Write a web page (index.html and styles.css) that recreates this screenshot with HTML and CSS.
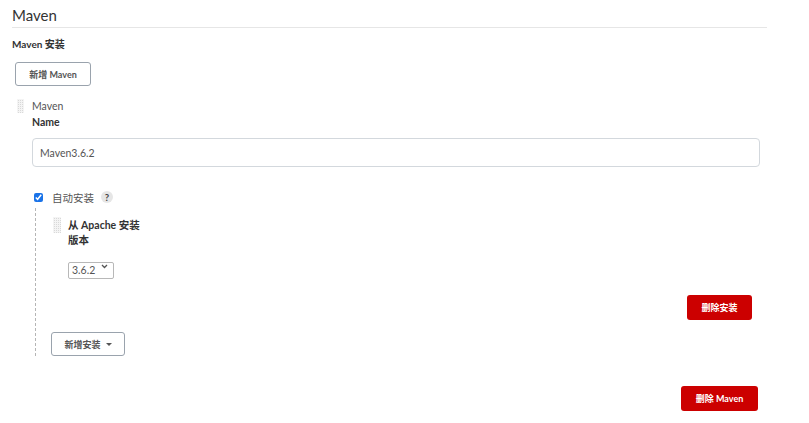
FILE: index.html
```html
<!DOCTYPE html>
<html lang="zh-CN">
<head>
    <meta charset="UTF-8">
    <meta name="viewport" content="width=device-width, initial-scale=1.0">
    <title>Maven</title>
    <link rel="stylesheet" href="styles.css">
</head>
<body>
    <div class="page">
        <h2 class="section-title">Maven</h2>
        <div class="setting-name">Maven 安装</div>
        <button class="btn btn-secondary btn-add">新增 Maven</button>

        <div class="repeated">
            <span class="handle"></span>
            <div class="repeated-body">
                <div class="item-title">Maven</div>
                <div class="field-label">Name</div>
                <input class="text-input" type="text" value="Maven3.6.2">

                <div class="optional">
                    <label class="check"><input type="checkbox" checked> 自动安装</label>
                    <span class="help">?</span>
                </div>

                <div class="nested">
                    <div class="chunk">
                        <span class="handle handle-sm"></span>
                        <div class="chunk-body">
                            <div class="field-label">从 Apache 安装</div>
                            <div class="field-label">版本</div>
                            <div class="select-wrap">
                                <select class="select">
                                    <option>3.6.2</option>
                                </select>
                                <svg class="chevron" width="7" height="5" viewBox="0 0 7 5"><path d="M1 1 L3.5 3.5 L6 1" fill="none" stroke="#555" stroke-width="1.3"/></svg>
                            </div>
                        </div>
                    </div>
                    <div class="actions">
                        <button class="btn btn-danger btn-del-install">删除安装</button>
                    </div>
                    <button class="btn btn-secondary btn-add-install">新增安装 <span class="caret"></span></button>
                </div>

                <div class="actions actions-main">
                    <button class="btn btn-danger btn-del-maven">删除 Maven</button>
                </div>
            </div>
        </div>
    </div>
</body>
</html>
```

FILE: styles.css
```css
* {
    margin: 0;
    padding: 0;
    box-sizing: border-box;
}

body {
    font-family: Lato, "Noto Sans CJK SC", sans-serif;
    color: #333;
    background: #fff;
}

.page {
    padding: 0 42px 0 12px;
}

.section-title {
    margin-top: 6px;
    padding-bottom: 3px;
    font-size: 15px;
    line-height: 18px;
    font-weight: normal;
    color: #333;
    border-bottom: 1px solid #e6e6e6;
}

.setting-name {
    margin-top: 9px;
    font-size: 10px;
    line-height: 14px;
    font-weight: bold;
}

.btn {
    display: inline-flex;
    align-items: center;
    justify-content: center;
    font-family: inherit;
    font-size: 9px;
    font-weight: bold;
    border-radius: 3px;
    cursor: pointer;
}

.btn-secondary {
    background: #fff;
    color: #555;
    border: 1px solid #9aa3ad;
}

.btn-danger {
    background: #cc0000;
    color: #fff;
    border: none;
}

.btn-add {
    display: flex;
    width: 76px;
    height: 24px;
    margin: 11px 0 0 3px;
}

.repeated {
    display: flex;
    margin: 13px 7px 0 5px;
}

.handle {
    flex: none;
    width: 7px;
    height: 14px;
    margin: 0 8px 0 0;
    background-color: #d9d9d9;
    background-image: linear-gradient(90deg, #f4f4f4 1px, transparent 1px), linear-gradient(#f4f4f4 1px, transparent 1px);
    background-size: 2px 2px;
}

.handle-sm {
    width: 8px;
    height: 16px;
    margin: 0 7px 0 2px;
}

.repeated-body {
    flex: 1;
}

.item-title {
    font-size: 10.5px;
    line-height: 14px;
    color: #555;
}

.field-label {
    margin-top: 2px;
    font-size: 10.5px;
    line-height: 14px;
    font-weight: bold;
}

.text-input {
    display: block;
    width: 100%;
    height: 29px;
    margin-top: 9px;
    padding: 0 7px;
    font-family: inherit;
    font-size: 10.5px;
    color: #555;
    border: 1px solid #d3d8dd;
    border-radius: 4px;
    outline: none;
}

.optional {
    display: flex;
    align-items: center;
    margin-top: 23px;
    height: 14px;
}

.check {
    display: flex;
    align-items: center;
    font-size: 10.5px;
    color: #555;
}

.check input {
    width: 9px;
    height: 9px;
    margin: 0 9px 0 2px;
    accent-color: #1a73e8;
}

.help {
    display: inline-flex;
    align-items: center;
    justify-content: center;
    width: 12px;
    height: 12px;
    margin-left: 7px;
    border-radius: 50%;
    background: #e6e6e6;
    font-size: 9.5px;
    font-weight: bold;
    color: #444;
}

.nested {
    margin: 4px 8px 0 3px;
    padding-left: 15px;
    border-left: 1px dashed #b5b5b5;
}

.chunk {
    display: flex;
    padding-top: 9px;
}

.chunk-body .field-label {
    margin-top: 0;
    line-height: 15px;
}

.chunk-body .field-label:first-child {
    margin-top: 1px;
}

.select-wrap {
    position: relative;
    width: 46px;
    height: 17px;
    margin-top: 10px;
}

.select {
    appearance: none;
    width: 100%;
    height: 100%;
    padding-left: 3px;
    font-family: inherit;
    font-size: 10.5px;
    color: #555;
    background: #fff;
    border: 1px solid #b8b8b8;
    border-radius: 2px;
    outline: none;
}

.chevron {
    position: absolute;
    right: 6px;
    top: 6px;
    pointer-events: none;
}

.actions {
    display: flex;
    justify-content: flex-end;
}

.btn-del-install {
    width: 65px;
    height: 25px;
    margin-top: 20px;
}

.btn-add-install {
    width: 74px;
    height: 24px;
    margin-top: 12px;
}

.caret {
    display: inline-block;
    margin-left: 5px;
    border-left: 3px solid transparent;
    border-right: 3px solid transparent;
    border-top: 3px solid #555;
}

.actions-main {
    margin-right: 2px;
}

.btn-del-maven {
    width: 77px;
    height: 25px;
    margin-top: 30px;
}
```
